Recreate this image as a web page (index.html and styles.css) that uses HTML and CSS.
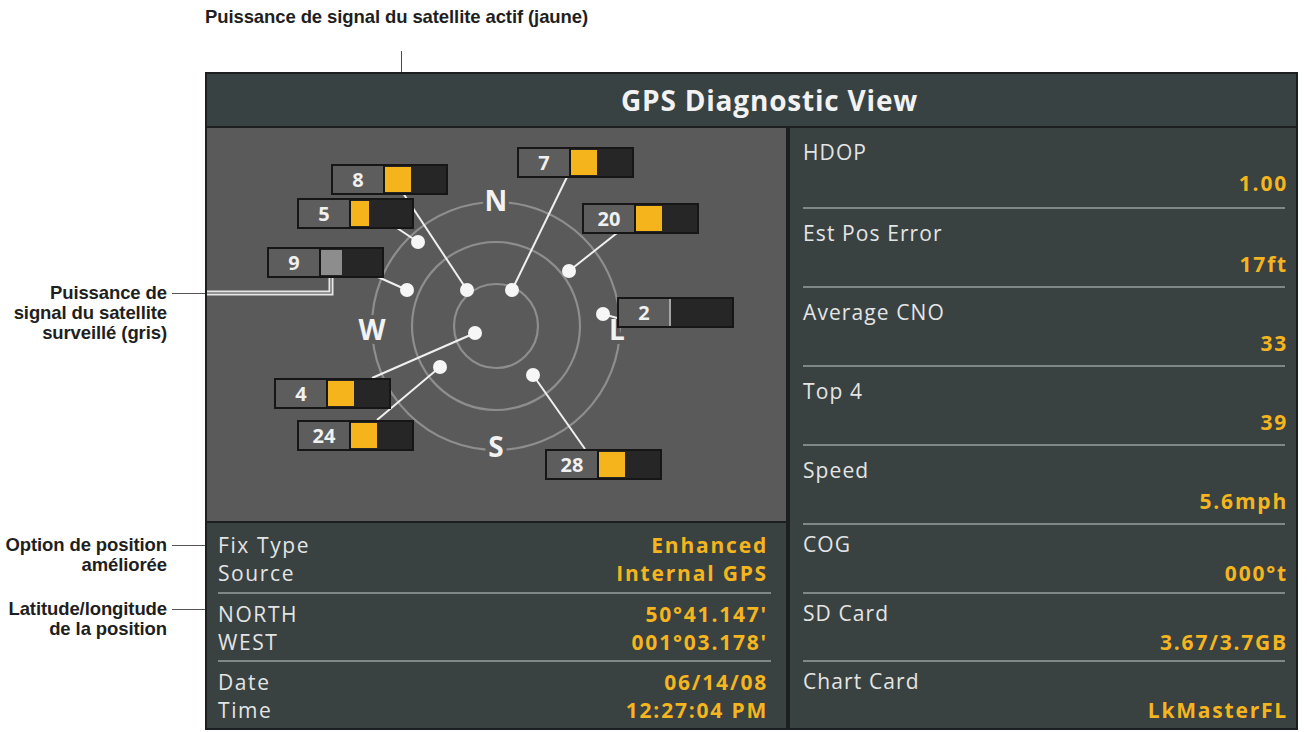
FILE: index.html
```html
<!DOCTYPE html>
<html>
<head>
	<title>GPS Diagnostic View</title>
	<link rel="stylesheet" href="styles.css">
</head>
<body>
<div class="sheet">
	<div class="topnote">
		<span class="note-text">Puissance de signal du satellite actif (jaune)</span>
		<i class="tick"></i>
	</div>
	<div class="stage">
		<div class="notes">
			<div class="note note-gris">
				<span class="note-text">Puissance de<br>signal du satellite<br>surveillé (gris)</span>
				<i class="lead"></i>
			</div>
			<div class="note note-fix">
				<span class="note-text">Option de position<br>améliorée</span>
				<i class="lead"></i>
			</div>
			<div class="note note-pos">
				<span class="note-text">Latitude/longitude<br>de la position</span>
				<i class="lead"></i>
			</div>
		</div>

		<div class="unit">
			<div class="titlebar">GPS Diagnostic View</div>
			<div class="panels">
				<div class="leftcol">
					<div class="sky">
						<!-- sky plot, drawn in page coordinates -->
						<svg class="plot" width="579" height="393" viewBox="207 128 579 393">
							<g class="rings">
								<circle cx="496" cy="326" r="42"/>
								<circle cx="496" cy="326" r="84"/>
								<circle cx="496" cy="326" r="124"/>
							</g>
							<g class="compass">
								<text x="496" y="211">N</text>
								<text x="372" y="340">W</text>
								<text x="617" y="340">L</text>
								<text x="496" y="457">S</text>
							</g>
							<g class="leads">
								<line x1="403" y1="193" x2="467" y2="290"/>
								<line x1="567" y1="177" x2="512" y2="290"/>
								<line x1="397" y1="228" x2="418" y2="242"/>
								<line x1="617" y1="233" x2="569" y2="271"/>
								<line x1="378" y1="277" x2="407" y2="290"/>
								<line x1="617" y1="318" x2="603" y2="314"/>
								<line x1="372" y1="378" x2="475" y2="333"/>
								<line x1="377" y1="420" x2="440" y2="367"/>
								<line x1="585" y1="449" x2="533" y2="375"/>
							</g>
							<g class="dots">
								<circle cx="467" cy="290" r="7"/>
								<circle cx="512" cy="290" r="7"/>
								<circle cx="418" cy="242" r="7"/>
								<circle cx="569" cy="271" r="7"/>
								<circle cx="407" cy="290" r="7"/>
								<circle cx="603" cy="314" r="7"/>
								<circle cx="475" cy="333" r="7"/>
								<circle cx="440" cy="367" r="7"/>
								<circle cx="533" cy="375" r="7"/>
							</g>

							<!-- callout into the tracked (grey) bar -->
							<polyline class="callout-outer" points="207,293 331,293 331,272"/>
							<polyline class="callout-inner" points="207,293 331,293 331,272"/>

							<g class="sat" transform="translate(331 164)">
								<rect class="frame" width="117" height="31"/>
								<rect class="cell" x="2" y="2" width="50" height="27"/>
								<rect class="bar" x="54" y="2" width="61" height="27"/>
								<rect class="used" x="54" y="3" width="26" height="25"/>
								<text x="27" y="23">8</text>
							</g>
							<g class="sat" transform="translate(517 147)">
								<rect class="frame" width="117" height="31"/>
								<rect class="cell" x="2" y="2" width="50" height="27"/>
								<rect class="bar" x="54" y="2" width="61" height="27"/>
								<rect class="used" x="54" y="3" width="26" height="25"/>
								<text x="27" y="23">7</text>
							</g>
							<g class="sat" transform="translate(297 198)">
								<rect class="frame" width="117" height="31"/>
								<rect class="cell" x="2" y="2" width="50" height="27"/>
								<rect class="bar" x="54" y="2" width="61" height="27"/>
								<rect class="used" x="54" y="3" width="18" height="25"/>
								<text x="27" y="23">5</text>
							</g>
							<g class="sat" transform="translate(582 203)">
								<rect class="frame" width="117" height="31"/>
								<rect class="cell" x="2" y="2" width="50" height="27"/>
								<rect class="bar" x="54" y="2" width="61" height="27"/>
								<rect class="used" x="54" y="3" width="26" height="25"/>
								<text x="27" y="23">20</text>
							</g>
							<g class="sat" transform="translate(267 247)">
								<rect class="frame" width="117" height="31"/>
								<rect class="cell" x="2" y="2" width="50" height="27"/>
								<rect class="bar" x="54" y="2" width="61" height="27"/>
								<rect class="tracked" x="54" y="3" width="21" height="25"/>
								<text x="27" y="23">9</text>
							</g>
							<g class="sat" transform="translate(617 297)">
								<rect class="frame" width="117" height="31"/>
								<rect class="cell" x="2" y="2" width="50" height="27"/>
								<rect class="bar" x="54" y="2" width="61" height="27"/>
								<rect class="zero" x="52" y="2" width="2" height="27"/>
								<text x="27" y="23">2</text>
							</g>
							<g class="sat" transform="translate(274 378)">
								<rect class="frame" width="117" height="31"/>
								<rect class="cell" x="2" y="2" width="50" height="27"/>
								<rect class="bar" x="54" y="2" width="61" height="27"/>
								<rect class="used" x="54" y="3" width="26" height="25"/>
								<text x="27" y="23">4</text>
							</g>
							<g class="sat" transform="translate(297 420)">
								<rect class="frame" width="117" height="31"/>
								<rect class="cell" x="2" y="2" width="50" height="27"/>
								<rect class="bar" x="54" y="2" width="61" height="27"/>
								<rect class="used" x="54" y="3" width="26" height="25"/>
								<text x="27" y="23">24</text>
							</g>
							<g class="sat" transform="translate(545 449)">
								<rect class="frame" width="117" height="31"/>
								<rect class="cell" x="2" y="2" width="50" height="27"/>
								<rect class="bar" x="54" y="2" width="61" height="27"/>
								<rect class="used" x="54" y="3" width="26" height="25"/>
								<text x="27" y="23">28</text>
							</g>
						</svg>
					</div>
					<div class="fix">
						<div class="group">
							<div class="row"><span>Fix Type</span><b>Enhanced</b></div>
							<div class="row"><span>Source</span><b>Internal GPS</b></div>
						</div>
						<div class="group">
							<div class="row"><span>NORTH</span><b>50°41.147'</b></div>
							<div class="row"><span>WEST</span><b>001°03.178'</b></div>
						</div>
						<div class="group">
							<div class="row"><span>Date</span><b>06/14/08</b></div>
							<div class="row"><span>Time</span><b>12:27:04 PM</b></div>
						</div>
					</div>
				</div>

				<div class="stats">
					<div class="stat"><span>HDOP</span><b>1.00</b></div>
					<div class="stat"><span>Est Pos Error</span><b>17ft</b></div>
					<div class="stat"><span>Average CNO</span><b>33</b></div>
					<div class="stat"><span>Top 4</span><b>39</b></div>
					<div class="stat"><span>Speed</span><b>5.6mph</b></div>
					<div class="stat short"><span>COG</span><b>000°t</b></div>
					<div class="stat short"><span>SD Card</span><b>3.67/3.7GB</b></div>
					<div class="stat short"><span>Chart Card</span><b>LkMasterFL</b></div>
				</div>
			</div>
		</div>
	</div>
</div>
</body>
</html>
```

FILE: styles.css
```css
body {
	margin: 0;
	background: #fff;
	font-family: "Open Sans", "DejaVu Sans", sans-serif;
}
.sheet {
	width: 1307px;
	height: 732px;
	overflow: hidden;
}

/* callout labels around the screen */
.note-text {
	font-family: "Liberation Sans", Arial, sans-serif;
	font-weight: bold;
	font-size: 18.5px;
	line-height: 20px;
	color: #1f1f1f;
	letter-spacing: -0.1px;
}
.topnote {
	height: 72px;
	box-sizing: border-box;
	padding: 7px 0 0 205px;
	display: flex;
	flex-direction: column;
}
.tick {
	width: 1px;
	height: 21px;
	margin: auto 0 0 196px;
	background: #4a4a4a;
}
.stage {
	display: flex;
}
.notes {
	width: 205px;
	display: flex;
	flex-direction: column;
}
.note {
	display: flex;
	align-items: flex-start;
}
.note .note-text {
	width: 167px;
	flex: none;
	text-align: right;
}
.note .lead {
	flex: 1;
	height: 1px;
	margin: 10px 0 0 5px;
	background: #555;
}
.note-gris { margin-top: 211px; }
.note-fix { margin-top: 192px; }
.note-pos { margin-top: 24px; }

/* the unit screen */
.unit {
	width: 1093px;
	height: 658px;
	box-sizing: border-box;
	border: 2px solid #1c1f1f;
	background: #1c1f1f;
	display: flex;
	flex-direction: column;
	gap: 2px;
}
.titlebar {
	height: 52px;
	padding-left: 36px;
	background: #394242;
	color: #f2f2f2;
	font-weight: 700;
	font-size: 28px;
	letter-spacing: 0.8px;
	display: flex;
	align-items: center;
	justify-content: center;
}
.panels {
	flex: 1;
	display: flex;
	gap: 4px;
}
.leftcol {
	width: 579px;
	display: flex;
	flex-direction: column;
	gap: 2px;
}
.sky {
	height: 393px;
	background: #5a5a5a;
}
.plot {
	display: block;
}

/* sky plot */
.rings circle {
	fill: none;
	stroke: #8e8e8e;
	stroke-width: 2.2;
}
.compass text {
	font: 700 28px "Open Sans", sans-serif;
	fill: #f2f2f2;
	text-anchor: middle;
	stroke: #5a5a5a;
	stroke-width: 8px;
	paint-order: stroke;
}
.leads line {
	stroke: #f0f0f0;
	stroke-width: 2;
}
.dots circle {
	fill: #f6f6f6;
}
.callout-outer {
	fill: none;
	stroke: #e6e6e6;
	stroke-width: 5;
}
.callout-inner {
	fill: none;
	stroke: #7a7a7a;
	stroke-width: 1.5;
}
.sat .frame { fill: #161616; }
.sat .cell { fill: #5d5d5d; }
.sat .bar { fill: #262626; }
.sat .used { fill: #f5b41b; }
.sat .tracked { fill: #8d8d8d; }
.sat .zero { fill: #a4a4a4; }
.sat text {
	font: 700 20px "Open Sans", sans-serif;
	fill: #f0f0f0;
	text-anchor: middle;
}

/* readouts */
.fix, .stats {
	background: #3a4141;
	color: #e3e5e5;
	font-size: 21px;
	letter-spacing: 1.1px;
}
.fix b, .stats b {
	color: #f4b51e;
	font-weight: 700;
	letter-spacing: 1.8px;
}
.fix {
	flex: 1;
	padding: 0 15px 0 11px;
	display: grid;
	grid-template-rows: 71px 68px 1fr;
}
.group {
	padding-top: 6px;
	border-bottom: 2px solid #7f8787;
}
.group:first-child {
	padding-top: 8px;
}
.group:last-child {
	border-bottom: none;
}
.row {
	display: flex;
	justify-content: space-between;
	line-height: 28px;
	padding-right: 3px;
}
.row span {
	letter-spacing: 1.6px;
}
.stats {
	flex: 1;
	padding: 0 11px 0 13px;
	display: grid;
	grid-template-rows: 81px 79px 79px 79px 79px 69px 68px 1fr;
}
.stat {
	display: flex;
	flex-direction: column;
	padding-top: 11px;
	border-bottom: 2px solid #7f8787;
}
.stat span,
.stat b {
	line-height: 26px;
}
.stat b {
	text-align: right;
	margin: 5px -3px 0 0;
}
.stat.short {
	padding-top: 6px;
}
.stat.short b {
	margin-top: 3px;
}
.stat:last-child {
	border-bottom: none;
}
```
